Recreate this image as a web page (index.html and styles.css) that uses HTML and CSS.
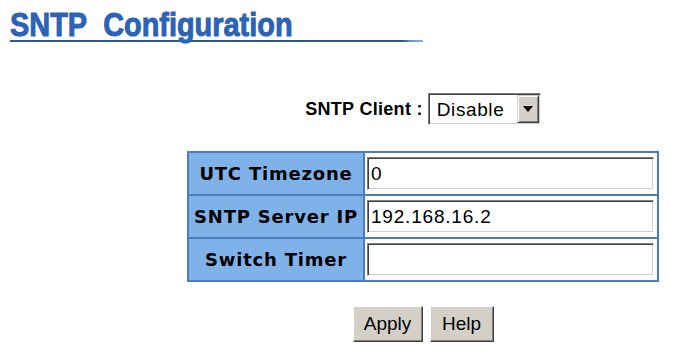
FILE: index.html
```html
<!DOCTYPE html>
<html lang="en">
<head>
    <meta charset="UTF-8">
    <title>SNTP Configuration</title>
    <link rel="stylesheet" href="styles.css">
</head>
<body>
    <!-- Page title -->
    <div class="title-bar">
        <h1 class="title">SNTP&nbsp;&nbsp;Configuration</h1>
    </div>

    <div class="content">
        <!-- Client mode -->
        <div class="client-row">
            <label class="client-label" for="client">SNTP Client :</label>
            <span class="select-wrap">
                <select class="select" id="client">
                    <option>Disable</option>
                    <option>Enable</option>
                </select>
                <span class="select-arrow">
                    <svg width="10" height="6" viewBox="0 0 10 6"><path d="M0 0h10L5 6z" fill="#000"/></svg>
                </span>
            </span>
        </div>

        <!-- Settings -->
        <table class="settings">
            <tr>
                <th class="label">UTC Timezone</th>
                <td class="value"><input class="field" type="text" value="0"></td>
            </tr>
            <tr>
                <th class="label">SNTP Server IP</th>
                <td class="value"><input class="field" type="text" value="192.168.16.2"></td>
            </tr>
            <tr>
                <th class="label">Switch Timer</th>
                <td class="value"><input class="field" type="text" value=""></td>
            </tr>
        </table>

        <!-- Actions -->
        <div class="actions">
            <button class="button apply">Apply</button>
            <button class="button help">Help</button>
        </div>
    </div>
</body>
</html>
```

FILE: styles.css
```css
/* General Styles */
body {
    margin: 0;
    font-family: "Liberation Sans", Arial, sans-serif;
    background-color: #fff;
    color: #000;
}

/* Title */
.title-bar {
    margin: 8px 0 0 10px;
    width: 413px;
    height: 2px;
    padding-top: 32px;
    position: relative;
    background: linear-gradient(to right, #2c5a8e 0, #2c5a8e 392px, #5f93d6 400px, #7fb0ea 413px);
    background-position: bottom;
    background-size: 100% 2px;
    background-repeat: no-repeat;
}

.title {
    position: absolute;
    top: 0;
    left: 0;
    margin: 0;
    font-family: "Liberation Sans", Arial, sans-serif;
    font-weight: bold;
    font-size: 34px;
    line-height: 32px;
    color: #2c63b6;
    -webkit-text-stroke: 1px #2c63b6;
    white-space: nowrap;
    transform: scaleX(0.85);
    transform-origin: left center;
}

/* Content block */
.content {
    margin-left: 187px;
    width: 472px;
}

.client-row {
    display: flex;
    justify-content: center;
    align-items: center;
    gap: 5px;
    margin-top: 51px;
}

.client-label {
    font-weight: bold;
    font-size: 18px;
    letter-spacing: 0.3px;
}

.select-wrap {
    position: relative;
    display: inline-block;
}

.select {
    -webkit-appearance: none;
    appearance: none;
    width: 113px;
    height: 32px;
    margin: 0;
    padding: 0 0 0 8px;
    font-family: "Liberation Sans", Arial, sans-serif;
    font-size: 19px;
    letter-spacing: 0.6px;
    background-color: #fff;
    border: 1px solid;
    border-color: #808080 #fff #fff #808080;
    box-shadow: inset 1px 1px #404040, inset -1px -1px #d4d0c8;
    border-radius: 0;
    outline: none;
}

.select-arrow {
    position: absolute;
    top: 2px;
    right: 2px;
    width: 20px;
    height: 26px;
    display: flex;
    align-items: center;
    justify-content: center;
    background-color: #d4d0c8;
    border: 1px solid;
    border-color: #d4d0c8 #404040 #404040 #d4d0c8;
    box-shadow: inset 1px 1px #fff, inset -1px -1px #808080;
    pointer-events: none;
}

/* Settings table */
.settings {
    margin-top: 26px;
    width: 472px;
    border-collapse: separate;
    border-spacing: 0;
    border: 1px solid #4c7cbc;
}

.settings th,
.settings td {
    border: 1px solid #4c7cbc;
}

.label {
    width: 174px;
    padding: 0;
    background-color: #80b2ea;
    font-family: "DejaVu Sans", Verdana, sans-serif;
    font-weight: bold;
    font-size: 18px;
    letter-spacing: 0.8px;
    text-align: center;
    white-space: nowrap;
}

.value {
    padding: 4px 2px;
    background-color: #fff;
}

.field {
    display: block;
    box-sizing: border-box;
    width: 287px;
    height: 33px;
    margin: 0;
    padding: 0 3px;
    font-family: "Liberation Sans", Arial, sans-serif;
    font-size: 19px;
    letter-spacing: 0.8px;
    border: 1px solid;
    border-color: #808080 #fff #fff #808080;
    box-shadow: inset 1px 1px #404040, inset -1px -1px #d4d0c8;
    outline: none;
}

/* Buttons */
.actions {
    display: flex;
    justify-content: center;
    gap: 7px;
    margin-top: 24px;
}

.button {
    height: 36px;
    padding: 0;
    font-family: "Liberation Sans", Arial, sans-serif;
    font-size: 19px;
    color: #000;
    background-color: #d4d0c8;
    border: 1px solid;
    border-color: #fff #404040 #404040 #fff;
    box-shadow: inset -1px -1px #808080;
    cursor: pointer;
}

.apply {
    width: 70px;
}

.help {
    width: 64px;
}
```
